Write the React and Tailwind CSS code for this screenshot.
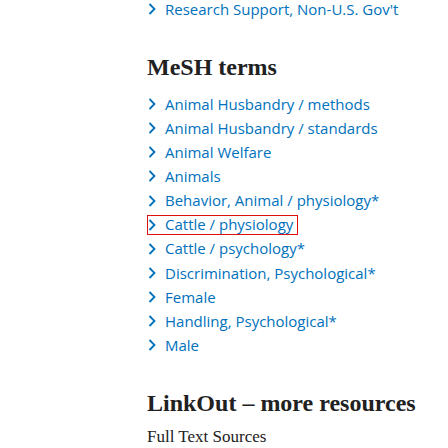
const terms = [
  "Animal Husbandry / methods",
  "Animal Husbandry / standards",
  "Animal Welfare",
  "Animals",
  "Behavior, Animal / physiology*",
  "Cattle / physiology",
  "Cattle / psychology*",
  "Discrimination, Psychological*",
  "Female",
  "Handling, Psychological*",
  "Male",
];

function Chevron() {
  return (
    <svg width="8" height="12" viewBox="0 0 8 12" className="shrink-0">
      <path d="M1.5 1 L6.5 6 L1.5 11" fill="none" stroke="#0071bc" strokeWidth="1.8" />
    </svg>
  );
}

function TermLink({ label, selected }) {
  return (
    <li className="flex h-[24.1px] items-center">
      <a
        className={
          "flex h-5 items-center gap-[9px] pr-1 " +
          (selected ? "-ml-px border border-[#e0100f]" : "")
        }
      >
        <Chevron />
        <span>{label}</span>
      </a>
    </li>
  );
}

export default function App() {
  return (
    <div className="h-[448px] w-[448px] overflow-hidden bg-white pl-[148px] font-['Open_Sans',sans-serif] text-[15px] text-[#0071bc]">
      <ul className="-mt-[3px]">
        <TermLink label="Research Support, Non-U.S. Gov't" />
      </ul>

      <h2 className="mt-[32px] -ml-px font-['Liberation_Serif',serif] text-[24px] font-bold leading-7 text-[#212121]">
        MeSH terms
      </h2>
      <ul className="mt-[11px]">
        {terms.map((t) => (
          <TermLink key={t} label={t} selected={t === "Cattle / physiology"} />
        ))}
      </ul>

      <h2 className="mt-[32px] -ml-px font-['Liberation_Serif',serif] text-[24px] font-bold leading-7 text-[#212121]">
        LinkOut – more resources
      </h2>
      <h3 className="mt-[8px] -ml-px font-['Liberation_Serif',serif] text-[17px] leading-6 text-[#212121]">
        Full Text Sources
      </h3>
    </div>
  );
}
